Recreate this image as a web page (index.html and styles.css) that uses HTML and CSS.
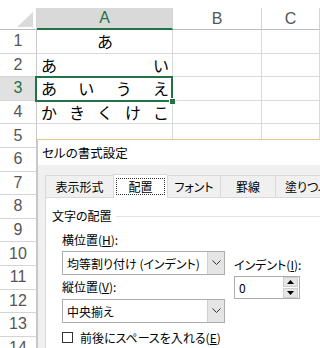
FILE: index.html
```html
<!DOCTYPE html>
<html lang="ja">
<head>
<meta charset="utf-8">
<link rel="stylesheet" href="styles.css">
</head>
<body>
<div class="sheet">
  <div class="top"></div><div class="top"></div><div class="top"></div><div class="top"></div>
  <div class="hd corner"><svg class="tri" width="16" height="15" viewBox="0 0 16 15"><polygon points="16,0 16,15 0,15" fill="#dadada"/></svg></div>
  <div class="hd col selcol">A</div>
  <div class="hd col">B</div>
  <div class="hd col">C</div>

  <div class="rh">1</div><div class="c dist"><span>あ</span></div><div class="c"></div><div class="c"></div>
  <div class="rh">2</div><div class="c dist"><span>あ</span><span>い</span></div><div class="c"></div><div class="c"></div>
  <div class="rh selrow">3</div><div class="c dist sel"><span>あ</span><span>い</span><span>う</span><span>え</span></div><div class="c"></div><div class="c"></div>
  <div class="rh">4</div><div class="c dist"><span>か</span><span>き</span><span>く</span><span>け</span><span>こ</span></div><div class="c"></div><div class="c"></div>
  <div class="rh">5</div><div class="c"></div><div class="c"></div><div class="c"></div>
  <div class="rh">6</div><div class="c"></div><div class="c"></div><div class="c"></div>
  <div class="rh">7</div><div class="c"></div><div class="c"></div><div class="c"></div>
  <div class="rh">8</div><div class="c"></div><div class="c"></div><div class="c"></div>
  <div class="rh">9</div><div class="c"></div><div class="c"></div><div class="c"></div>
  <div class="rh">10</div><div class="c"></div><div class="c"></div><div class="c"></div>
  <div class="rh">11</div><div class="c"></div><div class="c"></div><div class="c"></div>
  <div class="rh">12</div><div class="c"></div><div class="c"></div><div class="c"></div>
  <div class="rh">13</div><div class="c"></div><div class="c"></div><div class="c"></div>
  <div class="rh">14</div><div class="c"></div><div class="c"></div><div class="c"></div>
</div>

<div class="dlg">
  <div class="dlg-title">セルの書式設定</div>
  <div class="dlg-body">
    <div class="tabs">
      <div class="tab t1">表示形式</div>
      <div class="tab t2 active"><span class="focus">配置</span></div>
      <div class="tab t3">フォント</div>
      <div class="tab t4">罫線</div>
      <div class="tab t5">塗りつぶし</div>
    </div>
    <div class="page">
      <div class="gtitle"><span>文字の配置</span><i class="gline"></i></div>
      <div class="group">
        <div class="cols">
          <div class="lcol">
            <div class="lbl">横位置(<u>H</u>):</div>
            <div class="combo"><span class="ctext">均等割り付け (インデント)</span><span class="cbtn"><svg width="9" height="6" viewBox="0 0 9 6"><polyline points="0.5,0.5 4.5,4.5 8.5,0.5" fill="none" stroke="#333" stroke-width="1"/></svg></span></div>
            <div class="lbl lbl2">縦位置(<u>V</u>):</div>
            <div class="combo"><span class="ctext">中央揃え</span><span class="cbtn"><svg width="9" height="6" viewBox="0 0 9 6"><polyline points="0.5,0.5 4.5,4.5 8.5,0.5" fill="none" stroke="#333" stroke-width="1"/></svg></span></div>
          </div>
          <div class="rcol">
            <div class="lbl">インデント(<u>I</u>):</div>
            <div class="spin"><span class="stext">0</span><span class="sbtns"><span class="sb"><svg width="7" height="4" viewBox="0 0 7 4"><polygon points="3.5,0 7,4 0,4" fill="#000"/></svg></span><span class="sb"><svg width="7" height="4" viewBox="0 0 7 4"><polygon points="0,0 7,0 3.5,4" fill="#000"/></svg></span></span></div>
          </div>
        </div>
        <div class="chk"><span class="box"></span><span>前後にスペースを入れる(<u>E</u>)</span></div>
      </div>
    </div>
  </div>
</div>
</body>
</html>
```

FILE: styles.css
```css
html, body {
  margin: 0;
  padding: 0;
  width: 320px;
  height: 348px;
  overflow: hidden;
  background: #fff;
}
body {
  position: relative;
  font-family: "Noto Sans CJK JP", sans-serif;
}
.sheet {
  display: grid;
  grid-template-columns: 37px 136px 89px 58px;
  grid-template-rows: 8px 22px repeat(14, 23.6px);
}
.top { background: #fff; }
.hd {
  box-sizing: border-box;
  border-right: 1px solid #d4d4d4;
  border-bottom: 1px solid #bdbdbd;
  background: #fff;
  display: flex;
  align-items: center;
  justify-content: center;
  font-family: "Liberation Sans", sans-serif;
  font-size: 16px;
  color: #555;
}
.corner {
  justify-content: flex-end;
  align-items: flex-end;
  padding: 0 3px 2px 0;
}
.selcol {
  background: #d9d9d9;
  color: #217346;
  border-bottom: 2px solid #217346;
}
.rh {
  box-sizing: border-box;
  border-right: 1px solid #c8c8c8;
  border-bottom: 1px solid #d4d4d4;
  display: flex;
  align-items: center;
  justify-content: center;
  font-family: "Liberation Sans", sans-serif;
  font-size: 16px;
  color: #555;
}
.selrow {
  background: #e1e1e1;
  color: #217346;
}
.c {
  box-sizing: border-box;
  border-right: 1px solid #dadada;
  border-bottom: 1px solid #dadada;
  font-size: 16px;
  color: #000;
  display: flex;
  align-items: center;
}
.dist {
  justify-content: space-between;
  padding: 0 3px 0 4px;
}
.dist span:only-child { margin: 0 auto; }
.sel { position: relative; }
.sel::after {
  content: "";
  position: absolute;
  left: -2px;
  top: -1px;
  right: -1px;
  bottom: -2px;
  border: 2px solid #217346;
}
.sel::before {
  content: "";
  position: absolute;
  right: -4px;
  bottom: -5px;
  width: 5px;
  height: 5px;
  background: #217346;
  border: 1px solid #fff;
  z-index: 2;
}

/* dialog */
.dlg {
  position: absolute;
  left: 37px;
  top: 139px;
  width: 300px;
  height: 230px;
  background: #f0f0f0;
  border-top: 1px solid #e2c48c;
  border-left: 1px solid #e2c48c;
  font-size: 12px;
  color: #000;
  font-feature-settings: "palt";
  white-space: nowrap;
}
.dlg-title {
  background: #fff;
  height: 25px;
  line-height: 25px;
  padding-left: 4px;
  font-size: 12.5px;
}
.dlg-body {
  padding: 9px 0 0 7px;
}
.tabs {
  display: flex;
  height: 23px;
  align-items: flex-end;
}
.tab {
  box-sizing: border-box;
  height: 22px;
  border: 1px solid #d9d9d9;
  border-right: none;
  border-bottom: none;
  display: flex;
  align-items: center;
  justify-content: center;
  background: #f0f0f0;
  flex-shrink: 0;
}
.t1 { width: 68px; }
.t2 { width: 54px; }
.t3 { width: 53px; }
.t4 { width: 55px; }
.t5 { width: 70px; justify-content: flex-start; padding-left: 9px; }
.active {
  height: 24px;
  background: #fff;
  position: relative;
  margin-bottom: -1px;
  z-index: 1;
}
.focus {
  box-sizing: border-box;
  width: 49px;
  height: 17px;
  border: 1px dotted #333;
  display: flex;
  align-items: center;
  justify-content: center;
}
.page {
  background: #fff;
  border-top: 1px solid #d9d9d9;
  border-left: 1px solid #d9d9d9;
  height: 200px;
  padding: 9px 0 0 6px;
}
.gtitle {
  display: flex;
  align-items: center;
  height: 16px;
  gap: 4px;
}
.gline {
  flex: 1;
  height: 1px;
  background: #e3e3e3;
  margin-top: 2px;
}
.group {
  padding: 9px 0 0 10px;
}
.cols {
  display: flex;
  gap: 9px;
}
.lcol {
  width: 163px;
  flex-shrink: 0;
  display: flex;
  flex-direction: column;
}
.lbl {
  height: 16px;
  line-height: 16px;
}
.lbl2 { margin-top: 4px; }
.combo {
  box-sizing: border-box;
  margin-top: 3px;
  height: 24px;
  border: 1px solid #acacac;
  background: #fff;
  display: flex;
  align-items: center;
}
.lbl2 + .combo { margin-top: 4px; }
.ctext {
  flex: 1;
  padding-left: 4px;
  overflow: hidden;
}
.cbtn {
  box-sizing: border-box;
  width: 17px;
  height: 22px;
  background: #e5e5e5;
  border-left: 1px solid #cfcfcf;
  display: flex;
  align-items: center;
  justify-content: center;
}
.rcol {
  padding-top: 25px;
  width: 66px;
  flex-shrink: 0;
}
.spin {
  box-sizing: border-box;
  margin-top: 3px;
  width: 66px;
  height: 23px;
  border: 1px solid #acacac;
  display: flex;
  align-items: center;
}
.stext {
  flex: 1;
  padding-left: 4px;
}
.sbtns {
  display: flex;
  flex-direction: column;
  gap: 1px;
  margin-right: 1px;
}
.sb {
  box-sizing: border-box;
  width: 15px;
  height: 10px;
  background: #e5e5e5;
  border: 1px solid #cfcfcf;
  display: flex;
  align-items: center;
  justify-content: center;
}
.chk {
  margin-top: 6px;
  display: flex;
  align-items: center;
  gap: 7px;
  height: 16px;
}
.box {
  box-sizing: border-box;
  width: 11px;
  height: 11px;
  border: 1px solid #333;
  background: #fff;
}
u { text-decoration: underline; text-underline-offset: 1px; }
```
